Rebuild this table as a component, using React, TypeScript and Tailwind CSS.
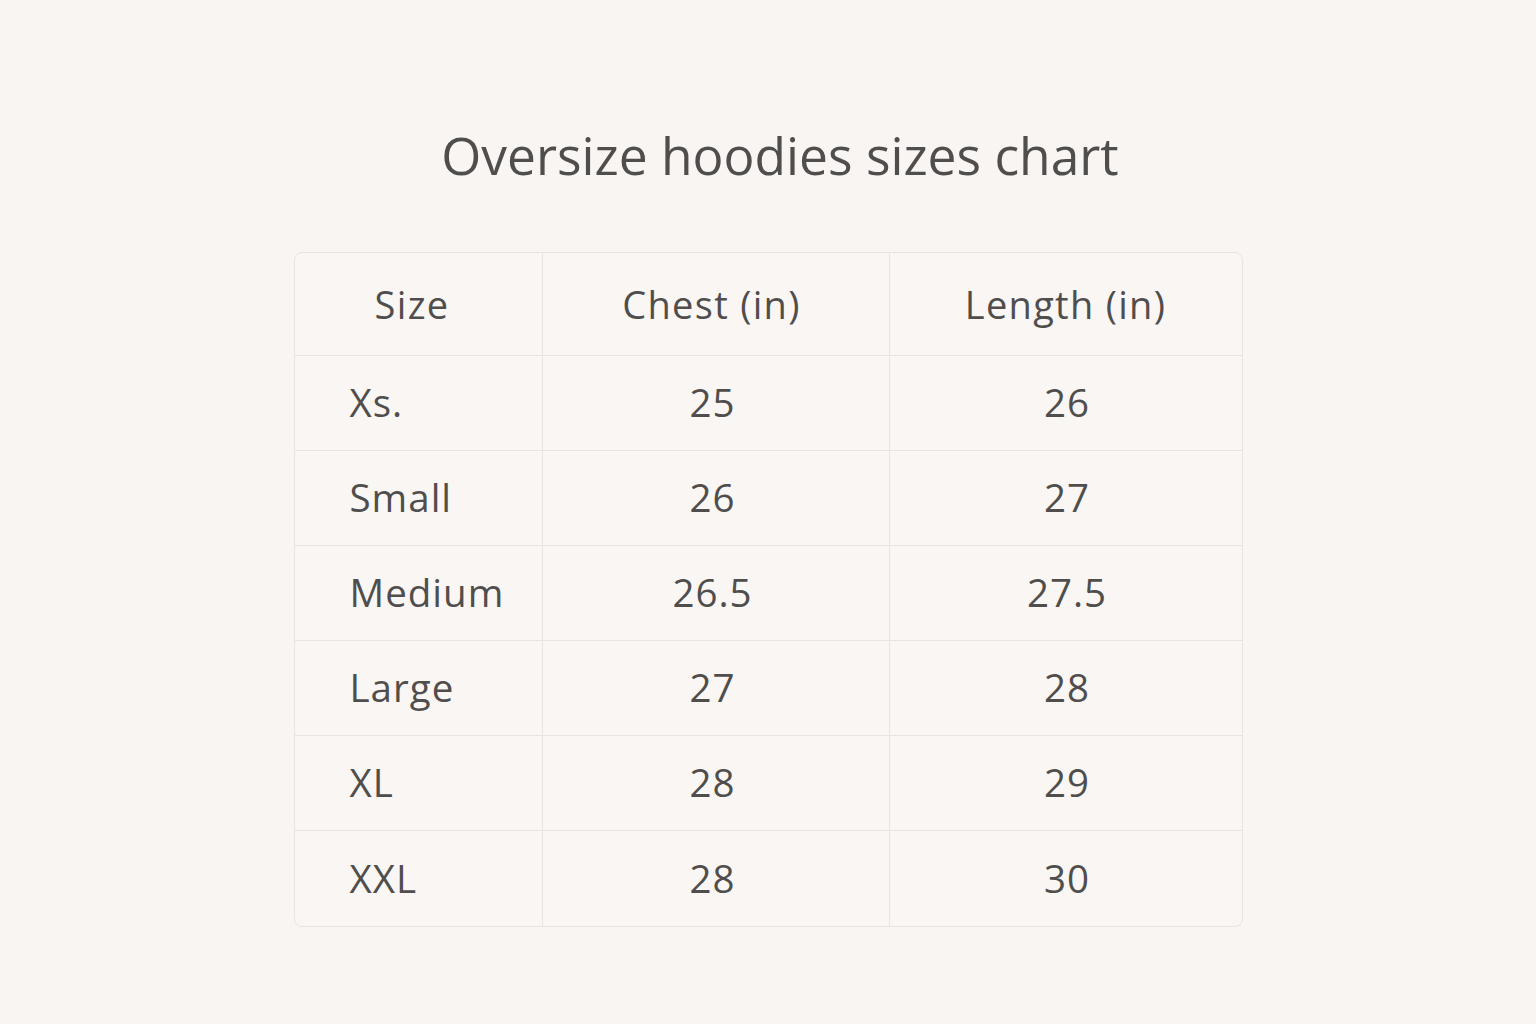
import React from 'react';

const rows = [
  { size: 'Xs.', chest: '25', length: '26' },
  { size: 'Small', chest: '26', length: '27' },
  { size: 'Medium', chest: '26.5', length: '27.5' },
  { size: 'Large', chest: '27', length: '28' },
  { size: 'XL', chest: '28', length: '29' },
  { size: 'XXL', chest: '28', length: '30' },
];

export default function App() {
  return (
    <div
      className="w-[1536px] h-[1024px] bg-[#f9f5f3] flex flex-col items-center text-[#504e4d]"
      style={{ fontFamily: '"Open Sans", "Noto Sans", sans-serif' }}
    >
      <h1 className="mt-[121px] h-[68px] pl-[24px] text-[51.5px] leading-[68px] font-normal">
        Oversize hoodies sizes chart
      </h1>

      <div className="mt-[63px] w-[949px] rounded-[8px] border border-[#e9e4e1] bg-[#faf6f4] overflow-hidden">
        <div className="grid grid-cols-[248px_347px_352px] h-[103px] border-b border-[#e9e4e1] text-[38px] tracking-[1.3px]">
          <div className="flex items-center justify-center pr-[12px] border-r border-[#e9e4e1]">Size</div>
          <div className="flex items-center justify-center pr-[8px] border-r border-[#e9e4e1]">Chest (in)</div>
          <div className="flex items-center justify-center">Length (in)</div>
        </div>
        {rows.map((r, i) => (
          <div
            key={r.size}
            className={`grid grid-cols-[248px_347px_352px] h-[95px] text-[38.5px] tracking-[1px] ${i < rows.length - 1 ? 'border-b border-[#e9e4e1]' : ''}`}
          >
            <div className="flex items-center pl-[55px] border-r border-[#e9e4e1]">{r.size}</div>
            <div className="flex items-center justify-center pr-[6px] border-r border-[#e9e4e1]">{r.chest}</div>
            <div className="flex items-center justify-center pl-[3px]">{r.length}</div>
          </div>
        ))}
      </div>
    </div>
  );
}
